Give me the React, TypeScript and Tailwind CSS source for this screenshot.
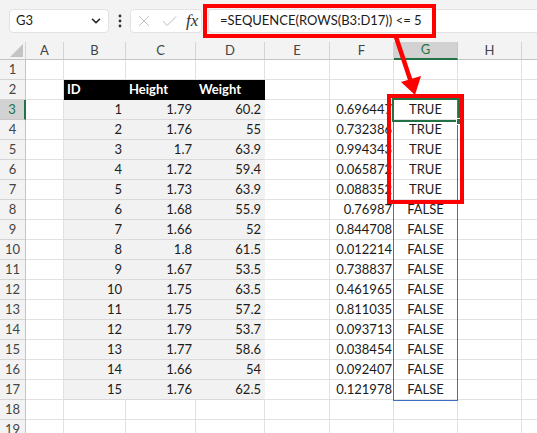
import { Check, ChevronDown, X } from "lucide-react";

const letters = ["A", "B", "C", "D", "E", "F", "G", "H", "I"];
const widths = [
  "w-[38px]",
  "w-[62px]",
  "w-[70px]",
  "w-[69px]",
  "w-[65px]",
  "w-[64px]",
  "w-[64px]",
  "w-[64px]",
  "w-[64px]",
];

// id, height, weight, random
const data: [number, string, string, string][] = [
  [1, "1.79", "60.2", "0.696447"],
  [2, "1.76", "55", "0.732386"],
  [3, "1.7", "63.9", "0.994343"],
  [4, "1.72", "59.4", "0.065872"],
  [5, "1.73", "63.9", "0.088352"],
  [6, "1.68", "55.9", "0.76987"],
  [7, "1.66", "52", "0.844708"],
  [8, "1.8", "61.5", "0.012214"],
  [9, "1.67", "53.5", "0.738837"],
  [10, "1.75", "63.5", "0.461965"],
  [11, "1.75", "57.2", "0.811035"],
  [12, "1.79", "53.7", "0.093713"],
  [13, "1.77", "58.6", "0.038454"],
  [14, "1.66", "54", "0.092407"],
  [15, "1.76", "62.5", "0.121978"],
];

type CellInfo = { text?: string; cls: string };

function rowCells(r: number): CellInfo[] {
  const cells: CellInfo[] = letters.map(() => ({
    cls: "border-r-[#e1e1e1] border-b-[#e1e1e1]",
  }));
  if (r === 2) {
    ["ID", "Height", "Weight"].forEach((t, i) => {
      cells[i + 1] = {
        text: t,
        cls: "bg-black border-r-black border-b-black text-white font-bold pl-[3px]",
      };
    });
  }
  const d = data[r - 3];
  if (d) {
    [String(d[0]), d[1], d[2]].forEach((t, i) => {
      cells[i + 1] = {
        text: t,
        cls: "bg-[#f2f2f2] border-r-[#f2f2f2] border-b-[#d9d9d9] justify-end pr-[3px]",
      };
    });
    cells[5] = {
      text: d[3],
      cls: "border-r-[#e1e1e1] border-b-[#e1e1e1] justify-end pr-[1px]",
    };
    cells[6] = {
      text: r <= 7 ? "TRUE" : "FALSE",
      cls: "border-r-[#e1e1e1] border-b-[#e1e1e1] justify-center",
    };
  }
  return cells;
}

function Row({ r }: { r: number }) {
  const active = r === 3;
  return (
    <div className="flex h-[20px]">
      <div
        className={
          active
            ? "w-[26px] shrink-0 flex items-center justify-center bg-[#d2d2d2] border-b border-b-[#c6c6c6] border-r-2 border-r-[#217346] text-[#217346]"
            : "w-[26px] shrink-0 flex items-center justify-center bg-[#f3f3f3] border-b border-b-[#d4d4d4] border-r border-r-[#c4c4c4] text-[#444]"
        }
      >
        {r}
      </div>
      {rowCells(r).map((c, i) => (
        <div
          key={i}
          className={`${widths[i]} shrink-0 flex items-center overflow-hidden whitespace-nowrap border-r border-b text-[#1b1b1b] ${c.cls}`}
        >
          {c.text}
        </div>
      ))}
    </div>
  );
}

export default function App() {
  const rows = Array.from({ length: 19 }, (_, i) => i + 1);
  return (
    <div className="relative w-[537px] h-[433px] overflow-hidden bg-white font-[Lato,sans-serif] text-[13px]">
      {/* formula bar */}
      <div className="h-[42px] bg-[#f3f3f3] flex items-start pt-[9px] pl-[9px]">
        <div className="w-[100px] h-[24px] shrink-0 bg-white rounded-[4px] border border-[#e2e2e2] flex items-center justify-between pl-[6px] pr-[5px] text-[#1b1b1b]">
          <span>G3</span>
          <ChevronDown size={14} strokeWidth={2.8} className="text-[#222]" />
        </div>
        <div className="w-[21px] h-[24px] shrink-0 flex items-center justify-center">
          <svg width="4" height="14" viewBox="0 0 4 14">
            <circle cx="2" cy="2" r="1.4" fill="#333" />
            <circle cx="2" cy="7" r="1.4" fill="#333" />
            <circle cx="2" cy="12" r="1.4" fill="#333" />
          </svg>
        </div>
        <div className="w-[72px] h-[24px] shrink-0 bg-white rounded-[4px] border border-[#e2e2e2] flex items-center pl-[4px] gap-[7px]">
          <X size={18} strokeWidth={1.2} className="text-[#b8b8b8]" />
          <Check size={19} strokeWidth={1.2} className="text-[#b8b8b8]" />
          <span className="font-['Liberation_Serif',serif] italic text-[17px] leading-none text-[#333] -mt-[2px]">
            fx
          </span>
        </div>
        <div className="ml-[6px] flex-1 h-[24px] bg-white rounded-l-[4px] border border-r-0 border-[#e2e2e2] flex items-center pl-[11px] text-[#1b1b1b] whitespace-nowrap">
          =SEQUENCE(ROWS(B3:D17)) &lt;= 5
        </div>
      </div>

      {/* column headers */}
      <div className="flex h-[18px]">
        <div className="w-[26px] shrink-0 bg-[#f3f3f3] border-r border-b border-r-[#d4d4d4] border-b-[#c4c4c4] flex items-end justify-end pr-[2px] pb-[2px]">
          <svg width="13" height="13" viewBox="0 0 13 13">
            <polygon points="13,0 13,13 0,13" fill="#c4c4c4" />
          </svg>
        </div>
        {letters.map((l, i) =>
          l === "G" ? (
            <div
              key={l}
              className={`${widths[i]} shrink-0 flex items-center justify-center bg-[#d2d2d2] border-r border-r-[#c6c6c6] border-b-2 border-b-[#217346] text-[#217346]`}
            >
              {l}
            </div>
          ) : (
            <div
              key={l}
              className={`${widths[i]} shrink-0 flex items-center justify-center bg-[#f3f3f3] border-r border-b border-r-[#d4d4d4] border-b-[#c4c4c4] text-[#444]`}
            >
              {l === "I" ? null : l}
            </div>
          )
        )}
      </div>

      {/* sheet */}
      {rows.map((r) => (
        <Row key={r} r={r} />
      ))}

      {/* spill range outline */}
      <div className="absolute left-[393px] top-[99px] w-[65px] h-[302px] border border-[#3c6fc2]" />
      {/* active cell */}
      <div className="absolute left-[392px] top-[98px] w-[68px] h-[24px] border-2 border-[#217346]" />
      <div className="absolute left-[456px] top-[118px] w-[7px] h-[7px] bg-[#217346] border border-white" />

      {/* callouts */}
      <div className="absolute left-[203px] top-[4px] w-[233px] h-[34px] border-4 border-[#ff0000]" />
      <div className="absolute left-[387px] top-[94px] w-[77px] h-[110px] border-4 border-[#ff0000]" />
      <svg className="absolute left-0 top-0" width="537" height="433">
        <line x1="396" y1="37" x2="411" y2="82" stroke="#ff0000" strokeWidth="4.5" />
        <polygon points="415,95 401,82 421,76" fill="#ff0000" />
      </svg>
    </div>
  );
}
